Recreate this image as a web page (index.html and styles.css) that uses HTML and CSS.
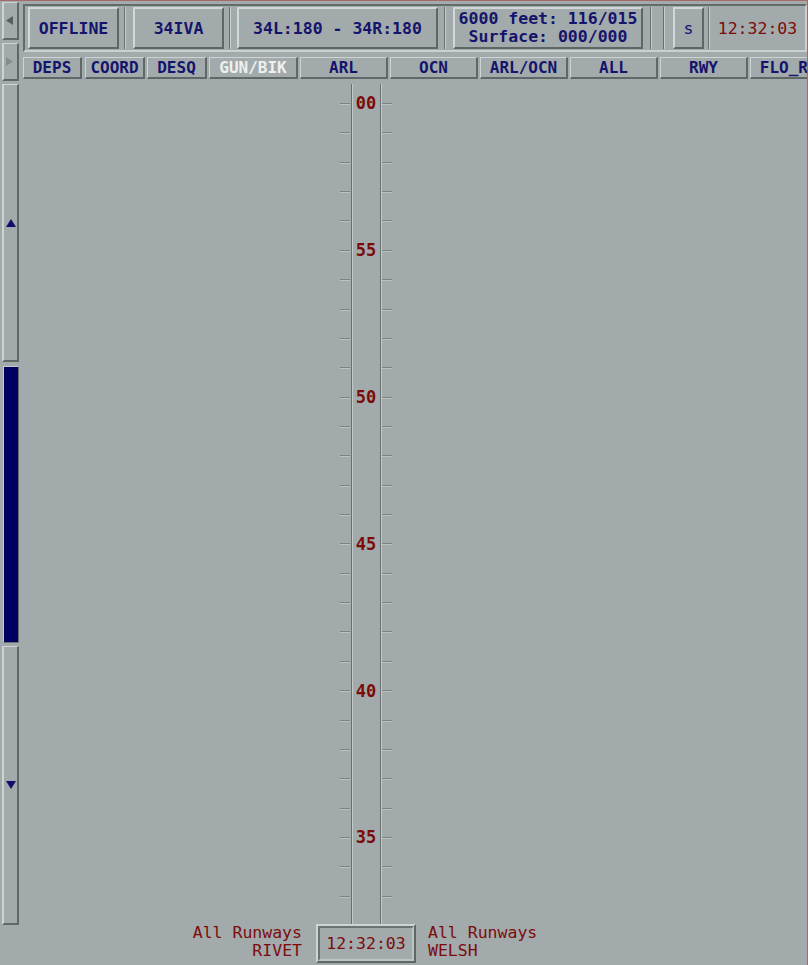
FILE: index.html
```html
<!DOCTYPE html>
<html>
<head>
<meta charset="utf-8">
<title>Strip display</title>
<link rel="stylesheet" href="styles.css">
</head>
<body>
<div class="app">
  <aside class="side">
    <div class="sbtn small">
      <svg width="7" height="9" viewBox="0 0 7 9"><polygon points="7,0 7,9 0,4.5" fill="#566060"/></svg>
    </div>
    <div class="sbtn small">
      <svg width="7" height="9" viewBox="0 0 7 9"><polygon points="0,0 0,9 7,4.5" fill="#848c8c"/></svg>
    </div>
    <div class="sbtn up">
      <svg width="10" height="8" viewBox="0 0 10 8"><polygon points="5,0 10,8 0,8" fill="#10106a"/></svg>
    </div>
    <div class="thumb"></div>
    <div class="sbtn down">
      <svg width="10" height="8" viewBox="0 0 10 8"><polygon points="0,0 10,0 5,8" fill="#10106a"/></svg>
    </div>
  </aside>

  <main class="main">
    <div class="topbar">
      <div class="btn b-off">OFFLINE</div>
      <div class="sep s1"></div>
      <div class="btn b-iva">34IVA</div>
      <div class="sep s2"></div>
      <div class="btn b-rwy">34L:180 - 34R:180</div>
      <div class="sep s3"></div>
      <div class="btn b-alt"><span class="two">6000 feet: 116/015
 Surface: 000/000</span></div>
      <div class="sep s4"></div>
      <div class="sep s5"></div>
      <div class="btn b-s">s</div>
      <div class="sep s6"></div>
      <div class="time">12:32:03</div>
    </div>

    <nav class="tabs">
      <div class="tab t-deps">DEPS</div>
      <div class="tab t-sm">COORD</div>
      <div class="tab t-sm">DESQ</div>
      <div class="tab t-gun sel">GUN/BIK</div>
      <div class="tab">ARL</div>
      <div class="tab">OCN</div>
      <div class="tab">ARL/OCN</div>
      <div class="tab">ALL</div>
      <div class="tab">RWY</div>
      <div class="tab">FLO_RWY</div>
    </nav>

    <section class="scope">
      <div class="ruler">
        <div class="mk"><i class="t"></i><b class="num">00</b><i class="t"></i></div>
        <div class="mk"><i class="t"></i><b></b><i class="t"></i></div>
        <div class="mk"><i class="t"></i><b></b><i class="t"></i></div>
        <div class="mk"><i class="t"></i><b></b><i class="t"></i></div>
        <div class="mk"><i class="t"></i><b></b><i class="t"></i></div>
        <div class="mk"><i class="t"></i><b class="num">55</b><i class="t"></i></div>
        <div class="mk"><i class="t"></i><b></b><i class="t"></i></div>
        <div class="mk"><i class="t"></i><b></b><i class="t"></i></div>
        <div class="mk"><i class="t"></i><b></b><i class="t"></i></div>
        <div class="mk"><i class="t"></i><b></b><i class="t"></i></div>
        <div class="mk"><i class="t"></i><b class="num">50</b><i class="t"></i></div>
        <div class="mk"><i class="t"></i><b></b><i class="t"></i></div>
        <div class="mk"><i class="t"></i><b></b><i class="t"></i></div>
        <div class="mk"><i class="t"></i><b></b><i class="t"></i></div>
        <div class="mk"><i class="t"></i><b></b><i class="t"></i></div>
        <div class="mk"><i class="t"></i><b class="num">45</b><i class="t"></i></div>
        <div class="mk"><i class="t"></i><b></b><i class="t"></i></div>
        <div class="mk"><i class="t"></i><b></b><i class="t"></i></div>
        <div class="mk"><i class="t"></i><b></b><i class="t"></i></div>
        <div class="mk"><i class="t"></i><b></b><i class="t"></i></div>
        <div class="mk"><i class="t"></i><b class="num">40</b><i class="t"></i></div>
        <div class="mk"><i class="t"></i><b></b><i class="t"></i></div>
        <div class="mk"><i class="t"></i><b></b><i class="t"></i></div>
        <div class="mk"><i class="t"></i><b></b><i class="t"></i></div>
        <div class="mk"><i class="t"></i><b></b><i class="t"></i></div>
        <div class="mk"><i class="t"></i><b class="num">35</b><i class="t"></i></div>
        <div class="mk"><i class="t"></i><b></b><i class="t"></i></div>
        <div class="mk"><i class="t"></i><b></b><i class="t"></i></div>
      </div>
      <div class="lbl lbl-left">All Runways<br>RIVET</div>
      <div class="clock"><span class="clock-in">12:32:03</span></div>
      <div class="lbl lbl-right">All Runways<br>WELSH</div>
    </section>
  </main>
</div>
</body>
</html>
```

FILE: styles.css
```css
html, body {
  margin: 0;
  padding: 0;
}

body {
  background: #a2aaab;
  font-family: "DejaVu Sans Mono", "Liberation Mono", monospace;
  overflow: hidden;
}

.app {
  width: 808px;
  height: 965px;
  box-sizing: border-box;
  border-top: 1px solid #a46b6b;
  border-right: 1px solid #a46b6b;
  display: flex;
  overflow: hidden;
}

/* ---------- left column ---------- */
.side {
  width: 22px;
  flex: none;
  display: flex;
  flex-direction: column;
  padding-top: 1px;
}

.sbtn {
  box-sizing: border-box;
  width: 17px;
  margin-left: 2px;
  border-style: solid;
  border-width: 1px 2px 2px 2px;
  border-color: #ccd4d4 #5f6767 #5f6767 #ccd4d4;
  display: flex;
  align-items: center;
  justify-content: center;
}

.sbtn.small {
  height: 38px;
  margin-bottom: 3px;
}

.sbtn.small svg {
  margin-left: -2px;
}

.sbtn.up {
  height: 278px;
}

.sbtn.down {
  height: 279px;
  margin-top: 3px;
}

.thumb {
  box-sizing: border-box;
  width: 16px;
  height: 277px;
  margin: 4px 0 0 3px;
  background: #000060;
  border-style: solid;
  border-width: 1px;
  border-color: #c4cccc #6a7272 #6a7272 #c4cccc;
}

/* ---------- main ---------- */
.main {
  flex: 1;
  min-width: 0;
  display: flex;
  flex-direction: column;
  overflow: hidden;
}

.topbar {
  box-sizing: border-box;
  height: 48px;
  margin: 3px 0 0 1px;
  border: 2px solid;
  border-color: #626a6a #c8d0d0 #c8d0d0 #626a6a;
  padding: 1px 0;
  display: flex;
}

.btn {
  box-sizing: border-box;
  flex: none;
  height: 42px;
  border: 2px solid;
  border-color: #d0d8d8 #5e6666 #5e6666 #d0d8d8;
  display: flex;
  align-items: center;
  justify-content: center;
  color: #14146c;
  font-size: 16.5px;
  font-weight: bold;
  white-space: pre;
}

.b-off { width: 91px; margin-left: 3px; }
.b-iva { width: 91px; margin-left: 7px; }
.b-rwy { width: 201px; margin-left: 6px; }
.b-alt { width: 190px; margin-left: 7px; }
.b-s   { width: 31px; margin-left: 8px; font-weight: normal; }

.two {
  line-height: 18px;
}

.sep {
  flex: none;
  width: 2px;
  background: linear-gradient(to right, #656d6d 0 1px, #c6cece 1px 2px);
}

.s1 { margin-left: 5px; }
.s2 { margin-left: 5px; }
.s3 { margin-left: 6px; }
.s4 { margin-left: 7px; }
.s5 { margin-left: 11px; }
.s6 { margin-left: 4px; }

.time {
  flex: 1;
  display: flex;
  align-items: center;
  justify-content: center;
  color: #7c0c0c;
  font-size: 16.5px;
}

/* ---------- tabs ---------- */
.tabs {
  display: flex;
  gap: 2px;
  height: 22px;
  margin: 5px 0 0 1px;
}

.tab {
  box-sizing: border-box;
  flex: none;
  width: 88px;
  height: 22px;
  border-style: solid;
  border-width: 1px 2px 2px 1px;
  border-color: #ccd4d4 #5f6767 #5f6767 #ccd4d4;
  display: flex;
  align-items: center;
  justify-content: center;
  color: #14146c;
  font-size: 16px;
  font-weight: bold;
  white-space: nowrap;
  overflow: hidden;
}

.t-deps { width: 59px; margin-right: 1px; }
.t-sm { width: 60px; }
.t-gun { width: 89px; }
.tab.sel { color: #eef0f0; }

/* ---------- scope ---------- */
.scope {
  flex: 1;
  display: grid;
  grid-template-columns: 294px 100px 1fr;
  grid-template-rows: 840px 41px;
  padding-top: 5px;
}

.ruler {
  grid-column: 2;
  grid-row: 1;
  justify-self: center;
  width: 52px;
  box-sizing: border-box;
  padding-top: 5.32px;
  background:
    linear-gradient(to right, #687070 0 1px, #c2caca 1px 2px) 11px 0 / 2px 100% no-repeat,
    linear-gradient(to right, #687070 0 1px, #c2caca 1px 2px) 40px 0 / 2px 100% no-repeat;
}

.mk {
  height: 29.36px;
  display: grid;
  grid-template-columns: 10px 32px 10px;
  align-items: center;
}

.t {
  display: block;
  height: 2px;
  background: linear-gradient(#7a8282 0 1px, #bac2c2 1px 2px);
}

.num {
  text-align: center;
  color: #7c0a0a;
  font-size: 17px;
  font-weight: bold;
  line-height: 17px;
}

.lbl {
  grid-row: 2;
  color: #7c0c0c;
  font-size: 16.5px;
  line-height: 18px;
  white-space: nowrap;
}

.lbl-left {
  grid-column: 1;
  text-align: right;
  padding-right: 14px;
}

.lbl-right {
  grid-column: 3;
  padding-left: 12px;
}

.clock {
  grid-column: 2;
  grid-row: 2;
  box-sizing: border-box;
  height: 39px;
  border: 2px solid;
  border-color: #ccd4d4 #5e6666 #5e6666 #ccd4d4;
  display: flex;
}

.clock-in {
  flex: 1;
  border: 2px solid;
  border-color: #6a7272 #bcc4c4 #bcc4c4 #6a7272;
  display: flex;
  align-items: center;
  justify-content: center;
  color: #7c0c0c;
  font-size: 16.5px;
}
```
